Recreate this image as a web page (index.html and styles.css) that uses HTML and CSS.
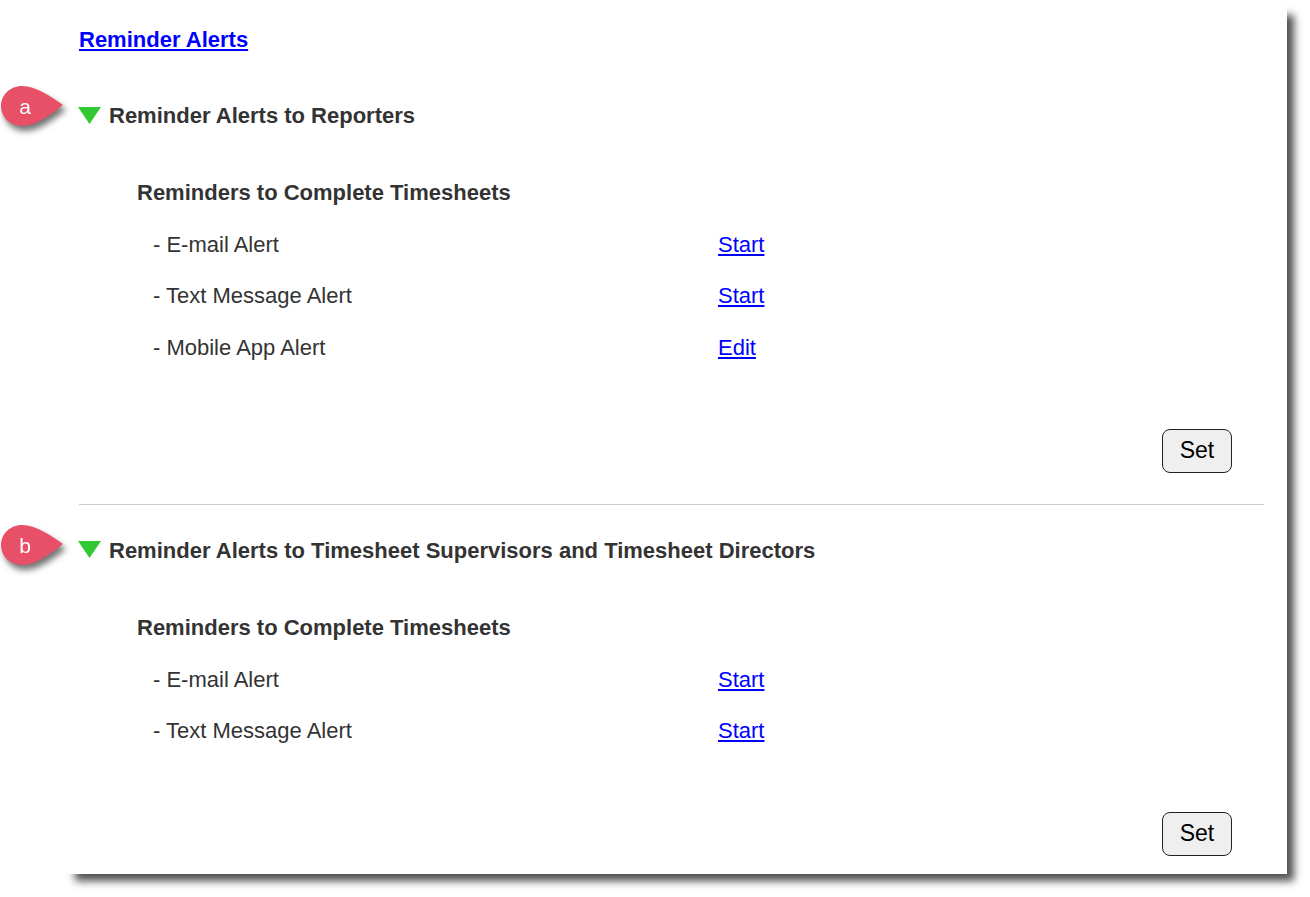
FILE: index.html
```html
<!DOCTYPE html>
<html lang="en">
<head>
    <meta charset="UTF-8">
    <meta name="viewport" content="width=device-width, initial-scale=1.0">
    <title>Reminder Alerts</title>
    <link rel="stylesheet" href="styles.css">
</head>
<body>
    <div class="sheet">
        <h1 class="page-title"><a href="#">Reminder Alerts</a></h1>

        <section class="alert-section section-first">
            <svg class="callout" width="66" height="46" viewBox="0 0 66 46"><path d="M22 1C36 1 50 11 63 20C50 30 36 41 22 41C10 41 1 32 1 21C1 10 10 1 22 1Z"/><text x="25" y="29">a</text></svg>
            <h2 class="section-head">
                <svg class="arrow" width="23" height="18" viewBox="0 0 23 18"><path d="M0 1H23L11.5 18Z"/></svg>
                Reminder Alerts to Reporters
            </h2>
            <h3 class="sub-head">Reminders to Complete Timesheets</h3>
            <div class="alert-row"><span>- E-mail Alert</span><a href="#">Start</a></div>
            <div class="alert-row"><span>- Text Message Alert</span><a href="#">Start</a></div>
            <div class="alert-row"><span>- Mobile App Alert</span><a href="#">Edit</a></div>
            <div class="actions"><button>Set</button></div>
        </section>

        <hr class="divider">

        <section class="alert-section">
            <svg class="callout callout-low" width="66" height="46" viewBox="0 0 66 46"><path d="M22 1C36 1 50 11 63 20C50 30 36 41 22 41C10 41 1 32 1 21C1 10 10 1 22 1Z"/><text x="25" y="29">b</text></svg>
            <h2 class="section-head">
                <svg class="arrow" width="23" height="18" viewBox="0 0 23 18"><path d="M0 1H23L11.5 18Z"/></svg>
                Reminder Alerts to Timesheet Supervisors and Timesheet Directors
            </h2>
            <h3 class="sub-head">Reminders to Complete Timesheets</h3>
            <div class="alert-row"><span>- E-mail Alert</span><a href="#">Start</a></div>
            <div class="alert-row"><span>- Text Message Alert</span><a href="#">Start</a></div>
            <div class="actions"><button>Set</button></div>
        </section>
    </div>
</body>
</html>
```

FILE: styles.css
```css
html, body {
    margin: 0;
    background-color: #fff;
}

body {
    box-sizing: border-box;
    height: 897px;
    padding-top: 4px;
    font-family: "Liberation Sans", Arial, sans-serif;
    font-size: 22px;
    color: #333;
}

.sheet {
    box-sizing: border-box;
    width: 1223px;
    height: 870px;
    margin-left: 64px;
    padding: 22px 23px 0 15px;
    background-color: #fff;
    box-shadow: 9px 9px 8px -2px #505050;
}

a {
    color: #00f;
}

.page-title {
    margin: 0;
    font-size: 22px;
    line-height: 28px;
}

.alert-section {
    position: relative;
}

.section-first {
    margin-top: 47px;
}

.section-head {
    display: flex;
    align-items: center;
    gap: 8px;
    margin: 0 0 0 -1px;
    height: 30px;
    font-size: 22px;
}

.arrow {
    flex: none;
    margin-top: -3px;
}

.arrow path {
    fill: #32c832;
}

.callout {
    position: absolute;
    left: -79px;
    top: -16px;
    overflow: visible;
    filter: drop-shadow(3px 5px 3px rgba(0, 0, 0, 0.55));
}

.callout-low {
    top: -12px;
}

.callout path {
    fill: #e85068;
}

.callout text {
    fill: #fff;
    font-size: 21px;
    text-anchor: middle;
}

.sub-head {
    margin: 47px 0 11px 58px;
    font-size: 22px;
    line-height: 30px;
}

.alert-row {
    display: flex;
    align-items: center;
    height: 51.5px;
    margin-left: 74px;
}

.alert-row span {
    width: 565px;
}

.actions {
    display: flex;
    justify-content: flex-end;
    padding: 55px 32px 0 0;
}

button {
    width: 70px;
    height: 44px;
    padding: 0;
    font-family: inherit;
    font-size: 23px;
    color: #000;
    background-color: #efefef;
    border: 1px solid #222;
    border-radius: 8px;
}

.divider {
    height: 1px;
    margin: 31px 0 31.25px;
    border: 0;
    background-color: #ccc;
}
```
